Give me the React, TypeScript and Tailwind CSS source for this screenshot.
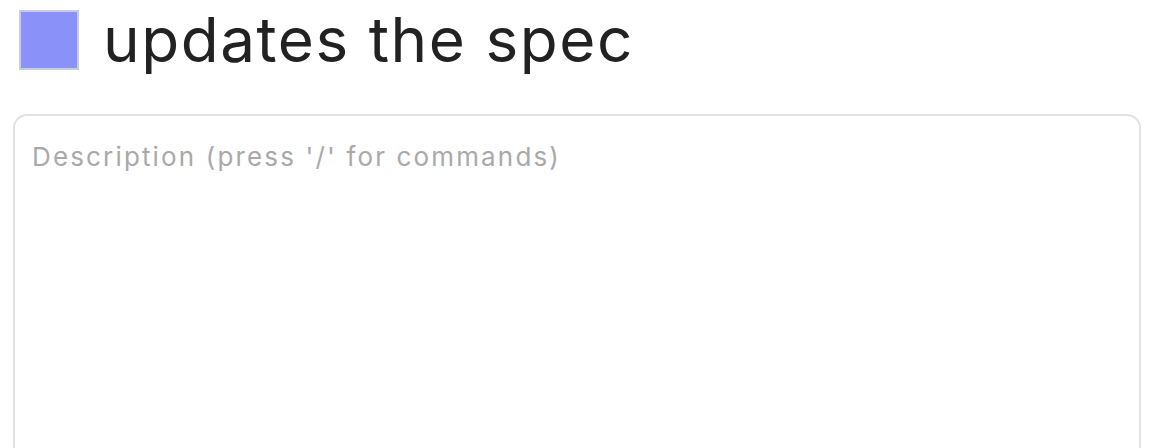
export default function App() {
  return (
    <div className="w-[1158px] h-[448px] overflow-hidden bg-white" style={{ fontFamily: "Inter, 'Noto Sans', sans-serif" }}>
      <div className="flex items-center pl-[19px] pt-[10px] gap-[24px]">
        <div className="w-[60px] h-[60px] bg-[#8a92f9] border-2 border-[#c9cbe6] shrink-0" />
        <div className="text-[62px] leading-[60px] text-[#222222] tracking-[1.55px]">updates the spec</div>
      </div>
      <div className="ml-[13px] mr-[17px] mt-[44px] h-[400px] rounded-[14px] border-2 border-[#e2e2e2] px-[17px] pt-[24px]">
        <div className="text-[26px] leading-[34px] text-[#a9a9a9] tracking-[2.15px]">Description (press '/' for commands)</div>
      </div>
    </div>
  );
}
